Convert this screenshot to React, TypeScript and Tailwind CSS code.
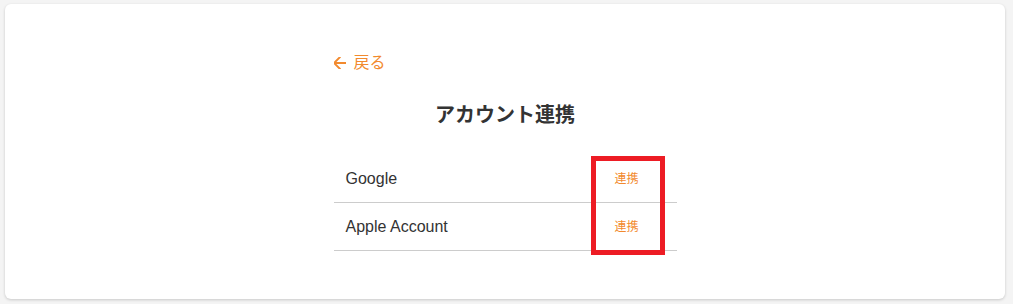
const providers = ["Google", "Apple Account"];

function BackArrow() {
    return (
        <svg width="12" height="12" viewBox="5 5 14 14" fill="none" stroke="currentColor" strokeWidth="2.2" strokeLinecap="round" strokeLinejoin="round">
            <path d="m12 19-7-7 7-7" />
            <path d="M19 12H5" />
        </svg>
    );
}

function ProviderRow({ name }: { name: string }) {
    return (
        <div className="flex items-center justify-between h-[48px] border-b border-[#cccccc] pl-[12px] pr-[14px]">
            <span className="text-[16px] text-[#333333]">{name}</span>
            <button className="w-[72px] text-center text-[12px] text-[#f28a2e]">連携</button>
        </div>
    );
}

export default function App() {
    return (
        <div
            className="h-[304px] bg-[#f4f4f4] pt-[4px] pl-[5px] pr-[8px]"
            style={{ fontFamily: '"Liberation Sans", "Noto Sans CJK JP", sans-serif' }}
        >
            <div className="h-[295px] bg-white rounded-md shadow-[0_1px_3px_rgba(0,0,0,0.18)]">
                <div className="w-[343px] mx-auto pt-[47px]">
                    <a className="flex items-center gap-[8px] h-[24px] text-[16px] text-[#f28a2e]">
                        <BackArrow />
                        <span>戻る</span>
                    </a>
                    <h1 className="mt-[26px] text-center text-[20px] leading-[28px] font-bold text-[#333333]">
                        アカウント連携
                    </h1>
                    <div className="relative mt-[26px]">
                        {providers.map((p) => (
                            <ProviderRow key={p} name={p} />
                        ))}
                        <div className="absolute left-[257px] top-[1px] w-[74px] h-[99px] border-[5px] border-[#ed1c24]" />
                    </div>
                </div>
            </div>
        </div>
    );
}
